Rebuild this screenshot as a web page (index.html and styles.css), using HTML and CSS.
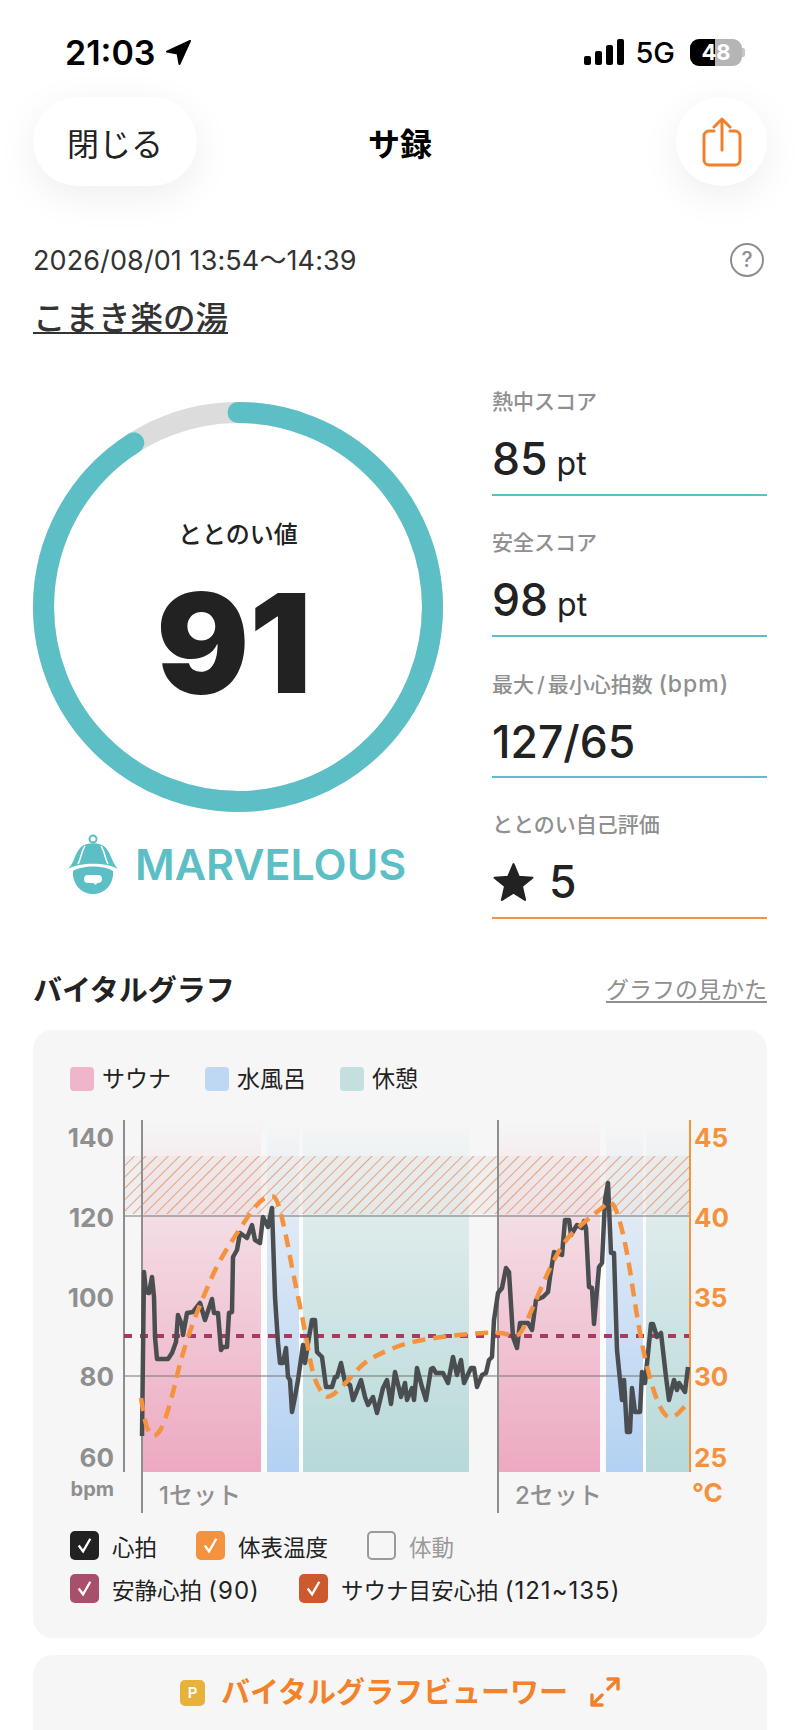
FILE: index.html
```html
<!DOCTYPE html>
<html lang="ja">
<head>
  <meta charset="utf-8">
  <link rel="stylesheet" href="styles.css">
  <title>サ録</title>
</head>
<body>
  <div class="status">
    <div class="status-left">
      <span class="clock">21:03</span>
      <svg class="nav-arrow" viewBox="0 0 28 28"><path d="M26 2 L2 13 L13 15 L15 26 Z" fill="#000" stroke="#000" stroke-width="2" stroke-linejoin="round"/></svg>
    </div>
    <div class="status-right">
      <svg class="signal" viewBox="0 0 40 26">
        <rect x="0" y="17" width="7" height="9" rx="2"/>
        <rect x="11" y="12" width="7" height="14" rx="2"/>
        <rect x="22" y="6" width="7" height="20" rx="2"/>
        <rect x="33" y="0" width="7" height="26" rx="2"/>
      </svg>
      <span class="network">5G</span>
      <div class="battery"><span class="battery-fill"></span><span class="battery-num">48</span></div>
      <span class="battery-nub"></span>
    </div>
  </div>

  <header class="topbar">
    <button class="close-btn">閉じる</button>
    <div class="title">サ録</div>
    <button class="share-btn">
      <svg viewBox="0 0 40 50" width="40" height="50" fill="none" stroke="#f0802c" stroke-width="3" stroke-linecap="round" stroke-linejoin="round">
        <path d="M12 14 H7 a5 5 0 0 0 -5 5 V43 a5 5 0 0 0 5 5 H33 a5 5 0 0 0 5 -5 V19 a5 5 0 0 0 -5 -5 H28"/>
        <path d="M20 33 V2 M12 10 L20 2 L28 10"/>
      </svg>
    </button>
  </header>

  <main class="content">
    <div class="meta">
      <span class="date">2026/08/01 13:54～14:39</span>
      <span class="help">?</span>
    </div>
    <a class="venue">こまき楽の湯</a>

    <section class="score">
      <div class="score-left">
        <div class="ring">
          <svg class="ring-svg" viewBox="0 0 410 410">
            <circle cx="205" cy="205" r="194.5" fill="none" stroke="#dcdcdc" stroke-width="21"/>
            <circle cx="205" cy="205" r="194.5" fill="none" stroke="#5cbfc6" stroke-width="21" stroke-linecap="round" pathLength="100" stroke-dasharray="91 100" transform="rotate(-90 205 205)"/>
          </svg>
          <div class="ring-text">
            <div class="ring-label">ととのい値</div>
            <div class="ring-value">91</div>
          </div>
        </div>
        <div class="mood">
          <svg class="mood-icon" viewBox="0 0 50 60">
            <circle cx="25" cy="5" r="3.5" fill="none" stroke="#5cbfc6" stroke-width="2"/>
            <path d="M0 35 C7 28 6 20 13 13 C18 8 32 8 37 13 C44 20 43 28 50 35 C38 28 12 28 0 35 Z" fill="#5cbfc6"/>
            <path d="M17 12 C13 18 13 25 10 30 M33 12 C37 18 37 25 40 30" fill="none" stroke="#fff" stroke-width="1.5"/>
            <path d="M5 37 C14 31 36 31 45 37 C46 50 37 60 25 60 C13 60 4 50 5 37 Z" fill="#5cbfc6"/>
            <path d="M20 41 H30 a3.5 3.5 0 0 1 0 8 H29 L28 51 L25 49 H20 a3.5 3.5 0 0 1 0 -8 Z" fill="#fff"/>
          </svg>
          <span>MARVELOUS</span>
        </div>
      </div>

      <div class="stats">
        <div class="stat">
          <div class="stat-label">熱中スコア</div>
          <div class="stat-value">85 <small>pt</small></div>
        </div>
        <div class="stat">
          <div class="stat-label">安全スコア</div>
          <div class="stat-value">98 <small>pt</small></div>
        </div>
        <div class="stat">
          <div class="stat-label">最大<span class="slash">/</span>最小心拍数 <span class="num">(bpm)</span></div>
          <div class="stat-value">127/65</div>
        </div>
        <div class="stat stat-self">
          <div class="stat-label">ととのい自己評価</div>
          <div class="stat-value">
            <svg class="star" viewBox="0 0 40 38"><path d="M20 2 L25 14 L38 15 L28 23 L31 36 L20 29 L9 36 L12 23 L2 15 L15 14 Z" fill="#222" stroke="#222" stroke-width="2" stroke-linejoin="round"/></svg>
            5
          </div>
        </div>
      </div>
    </section>

    <div class="graph-head">
      <h2>バイタルグラフ</h2>
      <a class="graph-link">グラフの見かた</a>
    </div>

    <section class="panel">
      <div class="legend">
        <div class="legend-item"><span class="swatch sw-sauna"></span>サウナ</div>
        <div class="legend-item"><span class="swatch sw-water"></span>水風呂</div>
        <div class="legend-item"><span class="swatch sw-rest"></span>休憩</div>
      </div>

      <svg class="chart" viewBox="60 1110 680 410">
        <defs>
          <linearGradient id="gSauna" x1="0" y1="0" x2="0" y2="1"><stop offset="0" stop-color="#eda9c1" stop-opacity="0"/><stop offset=".25" stop-color="#eda9c1" stop-opacity=".3"/><stop offset="1" stop-color="#eda9c1"/></linearGradient>
          <linearGradient id="gWater" x1="0" y1="0" x2="0" y2="1"><stop offset="0" stop-color="#b3d1f3" stop-opacity="0"/><stop offset=".25" stop-color="#b3d1f3" stop-opacity=".3"/><stop offset="1" stop-color="#b3d1f3"/></linearGradient>
          <linearGradient id="gRest" x1="0" y1="0" x2="0" y2="1"><stop offset="0" stop-color="#b7d9d9" stop-opacity="0"/><stop offset=".25" stop-color="#b7d9d9" stop-opacity=".35"/><stop offset="1" stop-color="#b7d9d9"/></linearGradient>
          <linearGradient id="gGap" x1="0" y1="0" x2="0" y2="1"><stop offset="0" stop-color="#fff" stop-opacity="0"/><stop offset=".4" stop-color="#fff" stop-opacity=".7"/><stop offset="1" stop-color="#fff" stop-opacity=".7"/></linearGradient>
          <pattern id="hatch" width="8" height="8" patternUnits="userSpaceOnUse" patternTransform="rotate(45)">
            <rect width="8" height="8" fill="#e9e4e0" fill-opacity=".45"/>
            <line x1="0" y1="0" x2="0" y2="8" stroke="#e07a50" stroke-width="2" stroke-opacity=".65"/>
          </pattern>
        </defs>

        <rect x="261" y="1120" width="6" height="352" fill="url(#gGap)"/>
        <rect x="299" y="1120" width="4" height="352" fill="url(#gGap)"/>
        <rect x="600" y="1120" width="6" height="352" fill="url(#gGap)"/>
        <rect x="643" y="1120" width="3" height="352" fill="url(#gGap)"/>

        <rect x="143" y="1120" width="118" height="352" fill="url(#gSauna)"/>
        <rect x="267" y="1120" width="32" height="352" fill="url(#gWater)"/>
        <rect x="303" y="1120" width="166" height="352" fill="url(#gRest)"/>
        <rect x="498" y="1120" width="102" height="352" fill="url(#gSauna)"/>
        <rect x="606" y="1120" width="37" height="352" fill="url(#gWater)"/>
        <rect x="646" y="1120" width="43" height="352" fill="url(#gRest)"/>

        <rect x="124" y="1156" width="565" height="58" fill="url(#hatch)"/>

        <line x1="124" y1="1216" x2="689" y2="1216" stroke="#777" stroke-opacity=".7" stroke-width="1.5"/>
        <line x1="124" y1="1376" x2="689" y2="1376" stroke="#777" stroke-opacity=".7" stroke-width="1.5"/>
        <line x1="124" y1="1120" x2="124" y2="1472" stroke="#8e8e8e" stroke-width="2"/>
        <line x1="142" y1="1120" x2="142" y2="1513" stroke="#8e8e8e" stroke-width="2"/>
        <line x1="498" y1="1120" x2="498" y2="1513" stroke="#8e8e8e" stroke-width="2"/>
        <line x1="690" y1="1120" x2="690" y2="1472" stroke="#f5923e" stroke-width="2"/>

        <line x1="124" y1="1336" x2="689" y2="1336" stroke="#a8395f" stroke-width="4" stroke-dasharray="8 8"/>

        <polyline class="hr-line" points="142,1436 144,1272 146,1292 149,1293 152,1277 154,1297 155,1337 157,1359 168,1359 172,1353 176,1342 178,1315 182,1325 183,1335 187,1313 193,1312 200,1303 205,1320 212,1299 214,1313 218,1313 221,1350 223,1347 227,1347 229,1313 232,1312 233,1257 237,1250 240,1233 247,1238 252,1225 255,1240 260,1243 263,1217 268,1227 272,1208 275,1297 278,1343 280,1363 283,1363 286,1348 288,1377 290,1380 292,1412 295,1397 298,1380 303,1345 305,1363 308,1343 312,1320 315,1320 317,1352 322,1357 326,1387 332,1387 335,1377 337,1377 341,1363 345,1382 350,1385 353,1400 356,1393 361,1380 365,1397 368,1405 373,1397 377,1413 383,1388 387,1380 391,1404 395,1372 401,1397 405,1383 407,1400 412,1388 414,1400 417,1368 422,1387 426,1400 431,1369 433,1368 436,1373 443,1373 448,1383 453,1357 457,1375 461,1360 464,1383 471,1368 474,1368 477,1387 482,1375 486,1373 489,1360 492,1357 494,1320 498,1293 502,1288 506,1268 509,1272 513,1337 517,1348 520,1323 528,1323 532,1330 536,1300 543,1297 548,1292 550,1277 554,1252 562,1255 565,1220 569,1220 571,1235 577,1225 582,1228 584,1221 586,1228 589,1287 592,1288 594,1324 599,1267 602,1263 605,1200 608,1183 611,1253 614,1253 617,1350 622,1400 624,1380 627,1432 630,1432 632,1388 635,1412 640,1412 642,1372 645,1383 651,1324 653,1324 657,1337 661,1333 666,1377 669,1400 674,1380 677,1390 679,1383 685,1392 688,1367"/>
        <path class="temp-line" d="M141,1398 Q145,1423 147.5,1428.5 Q150,1434 152.5,1435.5 Q155,1437 159,1432 Q163,1427 168,1410 Q173,1393 176.5,1378 Q180,1362 186.5,1342 Q193,1322 199,1307.5 Q205,1293 211.5,1278 Q218,1263 227.5,1248 Q237,1233 247,1218 Q257,1203 263.5,1199 Q270,1195 273.5,1196.5 Q277,1198 281,1214 Q285,1230 289,1251.5 Q293,1273 299,1301.5 Q305,1330 309,1353.5 Q313,1377 318,1386 Q323,1395 326.5,1396.5 Q330,1398 338.5,1390 Q347,1382 355,1372.5 Q363,1363 373,1357.5 Q383,1352 395,1347.5 Q407,1343 420,1340.5 Q433,1338 450,1336 Q467,1334 483.5,1333 Q500,1332 507.5,1334.5 Q515,1337 518.5,1334.5 Q522,1332 527.5,1319.5 Q533,1307 541.5,1287 Q550,1267 558.5,1252 Q567,1237 577,1228.5 Q587,1220 595,1213.5 Q603,1207 606.5,1203.5 Q610,1200 613.5,1205 Q617,1210 622,1230 Q627,1250 632,1283.5 Q637,1317 641,1338.5 Q645,1360 651,1381.5 Q657,1403 663.5,1412.5 Q670,1422 679.5,1412 L689,1402"/>

        <g class="axis-left">
          <text x="114" y="1137">140</text>
          <text x="114" y="1217">120</text>
          <text x="114" y="1297">100</text>
          <text x="114" y="1376">80</text>
          <text x="114" y="1457">60</text>
          <text class="unit" x="114" y="1489">bpm</text>
        </g>
        <g class="axis-right">
          <text x="694" y="1137">45</text>
          <text x="694" y="1217">40</text>
          <text x="694" y="1297">35</text>
          <text x="694" y="1376">30</text>
          <text x="694" y="1457">25</text>
          <text x="692" y="1492">°C</text>
        </g>
        <text class="set-label" x="159" y="1495">1セット</text>
        <text class="set-label" x="515" y="1495">2セット</text>
      </svg>

      <div class="checks">
        <div class="check-row">
          <label class="check"><span class="box box-black"><svg viewBox="0 0 30 30"><path d="M9 15 L13.5 21 L21 8"/></svg></span>心拍</label>
          <label class="check"><span class="box box-orange"><svg viewBox="0 0 30 30"><path d="M9 15 L13.5 21 L21 8"/></svg></span>体表温度</label>
          <label class="check check-off"><span class="box box-empty"></span>体動</label>
        </div>
        <div class="check-row">
          <label class="check"><span class="box box-plum"><svg viewBox="0 0 30 30"><path d="M9 15 L13.5 21 L21 8"/></svg></span><span>安静心拍 <span class="num">(90)</span></span></label>
          <label class="check"><span class="box box-rust"><svg viewBox="0 0 30 30"><path d="M9 15 L13.5 21 L21 8"/></svg></span><span>サウナ目安心拍 <span class="num">(121~135)</span></span></label>
        </div>
      </div>
    </section>

    <section class="viewer">
      <span class="p-badge">P</span>
      <span class="viewer-text">バイタルグラフビューワー</span>
      <svg class="expand" viewBox="0 0 30 30" fill="none" stroke="#f0802c" stroke-width="3.4" stroke-linecap="round" stroke-linejoin="round">
        <path d="M18 2 H28 V12 M28 2 L18 12"/>
        <path d="M2 18 V28 H12 M2 28 L12 18"/>
      </svg>
    </section>
  </main>
</body>
</html>
```

FILE: styles.css
```css
* {
  box-sizing: border-box;
}
html, body {
  margin: 0;
  height: 1730px;
  overflow: hidden;
}
body {
  background: #fff;
  color: #222;
  font-family: "Inter", "Noto Sans CJK JP", sans-serif;
}

/* status bar */
.status {
  height: 97px;
  padding: 33px 55px 0 65px;
  display: flex;
  justify-content: space-between;
  align-items: flex-start;
  color: #000;
}
.status-left, .status-right {
  display: flex;
  align-items: center;
  height: 38px;
}
.clock {
  font-size: 34px;
  font-weight: 600;
}
.nav-arrow {
  width: 27px;
  height: 27px;
  margin-left: 10px;
}
.signal {
  width: 40px;
  height: 26px;
}
.network {
  font-size: 29px;
  font-weight: 500;
  margin-left: 11px;
}
.battery {
  position: relative;
  width: 52px;
  height: 27px;
  margin-left: 15px;
  border-radius: 9px;
  background: #b5b5b5;
  overflow: hidden;
  text-align: center;
  color: #fff;
  font-size: 22px;
  font-weight: 700;
  line-height: 27px;
}
.battery-fill {
  position: absolute;
  left: 0;
  top: 0;
  width: 25px;
  height: 27px;
  background: #000;
}
.battery-num {
  position: relative;
}
.battery-nub {
  width: 3px;
  height: 9px;
  border-radius: 0 2px 2px 0;
  background: #c4c4c4;
}

/* top buttons */
.topbar {
  height: 89px;
  padding: 0 33px;
  display: grid;
  grid-template-columns: 1fr auto 1fr;
  align-items: center;
}
.close-btn {
  width: 164px;
  height: 89px;
  border: 0;
  border-radius: 45px;
  background: #fff;
  box-shadow: 0 10px 40px rgba(0, 0, 0, .07);
  font: 400 32px "Noto Sans CJK JP", sans-serif;
  color: #222;
}
.title {
  font-size: 32px;
  font-weight: 700;
  color: #000;
}
.share-btn {
  justify-self: end;
  width: 91px;
  height: 89px;
  padding: 0;
  border: 0;
  border-radius: 50%;
  background: #fff;
  box-shadow: 0 10px 40px rgba(0, 0, 0, .07);
  display: flex;
  align-items: center;
  justify-content: center;
}

.content {
  padding: 0 33px;
}
.meta {
  margin-top: 57px;
  height: 34px;
  display: flex;
  justify-content: space-between;
  align-items: center;
}
.date {
  font-size: 27px;
  letter-spacing: .1px;
  color: #333;
  margin-top: -4px;
}
.help {
  width: 34px;
  height: 34px;
  margin-right: 3px;
  border: 2.5px solid #8e8e8e;
  border-radius: 50%;
  color: #8e8e8e;
  font-size: 21px;
  font-weight: 500;
  line-height: 29px;
  text-align: center;
}
.venue {
  display: block;
  width: max-content;
  margin-top: 18px;
  font-size: 32.5px;
  font-weight: 500;
  line-height: 48px;
  color: #333;
  text-decoration: underline;
  text-underline-offset: 2px;
  text-decoration-thickness: 2px;
}

/* score block */
.score {
  margin-top: 59px;
  display: flex;
  justify-content: space-between;
  align-items: flex-start;
}
.score-left {
  width: 410px;
}
.ring {
  display: grid;
  width: 410px;
  height: 410px;
}
.ring-svg, .ring-text {
  grid-area: 1 / 1;
}
.ring-svg {
  width: 410px;
  height: 410px;
}
.ring-text {
  text-align: center;
}
.ring-label {
  margin-top: 115px;
  font-size: 24px;
  font-weight: 500;
  line-height: 36px;
}
.ring-value {
  margin-top: 10px;
  padding-right: 8px;
  font-size: 138px;
  font-weight: 900;
  line-height: 160px;
}
.mood {
  margin-top: 22px;
  padding-left: 35px;
  display: flex;
  align-items: center;
  color: #5cbfc6;
  font-size: 43px;
  font-weight: 600;
}
.mood-icon {
  width: 50px;
  height: 60px;
  margin-right: 17px;
}
.stats {
  width: 275px;
  margin-top: -47px;
}
.stat {
  height: 141px;
  padding-top: 32px;
  border-bottom: 2px solid #5cbfc6;
}
.stat-self {
  border-bottom-color: #f5923e;
}
.stat-label {
  font-size: 21px;
  font-weight: 500;
  line-height: 30px;
  color: #8f8f8f;
}
.slash {
  margin: 0 3px;
}
.stat-label .num {
  font-size: 23px;
  letter-spacing: 1px;
}
.stat-value {
  margin-top: 13px;
  display: flex;
  align-items: baseline;
  gap: 9px;
  font-size: 44.5px;
  font-weight: 500;
  line-height: 58px;
}
.stat-value small {
  font-size: 32px;
  font-weight: 400;
}
.star {
  width: 43px;
  height: 40px;
  align-self: center;
  margin-right: 5px;
}

/* graph */
.graph-head {
  margin-top: 49px;
  display: flex;
  justify-content: space-between;
  align-items: center;
  height: 40px;
}
.graph-head h2 {
  margin: 0;
  font-size: 29px;
  font-weight: 700;
}
.graph-link {
  font-size: 23px;
  color: #8f8f8f;
  text-decoration: underline;
  text-underline-offset: 3px;
}
.panel {
  margin-top: 22px;
  height: 608px;
  padding: 37px 37px 0;
  border-radius: 20px;
  background: #f6f6f6;
}
.legend {
  display: flex;
  gap: 34px;
  font-size: 23px;
  line-height: 24px;
}
.legend-item {
  display: flex;
  align-items: center;
  gap: 8px;
}
.swatch {
  width: 24px;
  height: 24px;
  border-radius: 4px;
}
.sw-sauna { background: #efb6cb; }
.sw-water { background: #bed8f4; }
.sw-rest { background: #c3dfde; }

.chart {
  display: block;
  width: 680px;
  height: 410px;
  margin: 19px 0 0 -10px;
}
.hr-line {
  fill: none;
  stroke: #4b4e51;
  stroke-width: 4.5;
  stroke-linejoin: round;
}
.temp-line {
  fill: none;
  stroke: #f5923e;
  stroke-width: 4.5;
  stroke-dasharray: 13 8;
}
.axis-left text, .axis-right text {
  font-size: 26px;
  font-weight: 700;
  dominant-baseline: central;
}
.axis-left text {
  fill: #8f8f8f;
  text-anchor: end;
}
.axis-left .unit {
  font-size: 20px;
}
.axis-right text {
  fill: #f5923e;
}
.set-label {
  font-size: 24px;
  font-weight: 500;
  fill: #8f8f8f;
  dominant-baseline: central;
}

.checks {
  margin-top: 4px;
}
.check-row {
  display: flex;
  gap: 39px;
  height: 43px;
  align-items: center;
}
.check {
  display: flex;
  align-items: center;
  gap: 13px;
  font-size: 22.5px;
}
.check .num {
  font-size: 24px;
  letter-spacing: 1px;
}
.check-off {
  color: #9a9a9a;
}
.box {
  width: 29px;
  height: 29px;
  border-radius: 5px;
}
.box svg {
  display: block;
  fill: none;
  stroke: #fff;
  stroke-width: 2.4;
}
.box-black { background: #222; }
.box-orange { background: #f5923e; }
.box-plum { background: #a84f6c; }
.box-rust { background: #cc5a2e; }
.box-empty { border: 2.5px solid #9a9a9a; }

.viewer {
  margin-top: 17px;
  height: 100px;
  border-radius: 20px;
  background: #f6f6f6;
  display: flex;
  justify-content: center;
  align-items: flex-start;
  padding-top: 19px;
  gap: 16px;
}
.p-badge {
  width: 25px;
  height: 26px;
  margin-top: 6px;
  border-radius: 5px;
  background: #e8b13a;
  color: #fff;
  font-size: 15px;
  font-weight: 600;
  line-height: 26px;
  text-align: center;
}
.viewer-text {
  font-size: 29px;
  font-weight: 700;
  line-height: 38px;
  color: #f2822b;
}
.expand {
  width: 30px;
  height: 30px;
  margin: 3px 0 0 6px;
}
```
